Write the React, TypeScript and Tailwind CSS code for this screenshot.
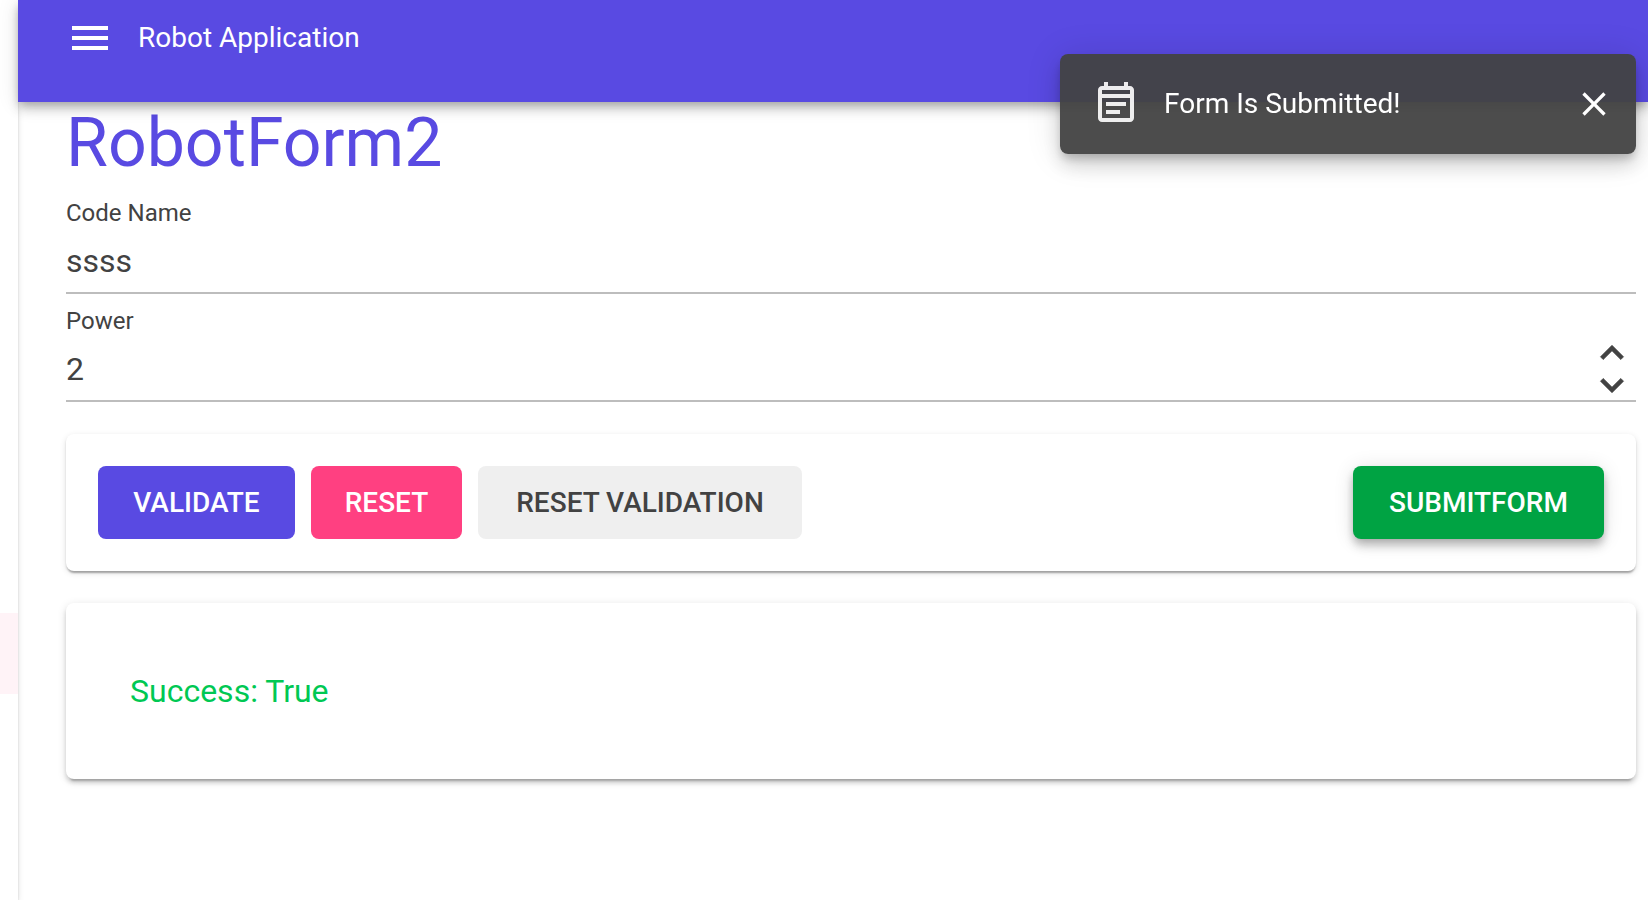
import { useState, type ReactNode } from "react";

const raised =
  "shadow-[0px_4px_8px_-2px_rgba(0,0,0,0.2),0px_8px_10px_0px_rgba(0,0,0,0.14),0px_2px_20px_0px_rgba(0,0,0,0.12)]";

function Icon({ path, className }: { path: string; className: string }) {
  return (
    <svg viewBox="0 0 24 24" fill="currentColor" aria-hidden="true" className={className}>
      <path d={path} />
    </svg>
  );
}

function Field({ id, label, children }: { id: string; label: string; children: ReactNode }) {
  return (
    <div className="border-b-2 border-[#bdbdbd] pt-[14px]">
      <label htmlFor={id} className="mb-1 block text-2xl leading-[26px]">
        {label}
      </label>
      <div className="flex h-[62px] items-center">{children}</div>
    </div>
  );
}

const buttonBase = "h-[73px] cursor-pointer rounded-lg px-4 text-[28px] font-medium uppercase";
const inputBase = "h-full min-w-0 flex-1 bg-transparent text-[32px] outline-none";
const spinButton = "flex h-8 w-12 cursor-pointer items-center justify-center";
const spinIcon = "size-[46px] shrink-0 stroke-current [stroke-width:0.4]";

export default function App() {
  const [codeName, setCodeName] = useState("ssss");
  const [power, setPower] = useState(2);
  const [open, setOpen] = useState(true);

  const reset = () => {
    setCodeName("");
    setPower(0);
  };

  return (
    <div className="flex min-h-screen bg-white font-[Roboto,sans-serif] text-[#424242]">
      <aside className="w-[18px] shrink-0 bg-white pt-[613px] shadow-[0px_4px_2px_-2px_rgba(0,0,0,0.2),0px_2px_2px_0px_rgba(0,0,0,0.14),0px_2px_6px_0px_rgba(0,0,0,0.12)]">
        <div className="h-[81px] bg-[#fff3f7]" />
      </aside>

      <div className="min-w-0 flex-1">
        <header className={`relative flex items-center gap-6 bg-[#594ae2] pt-[14px] pb-10 pl-12 text-white ${raised}`}>
          <button type="button" aria-label="Menu" className="cursor-pointer">
            <Icon className="size-12" path="M3 18h18v-2H3v2zm0-5h18v-2H3v2zm0-7v2h18V6H3z" />
          </button>
          <span className="text-[28px] leading-[44px]">Robot Application</span>
        </header>

        <main className="pr-3 pb-8 pl-12">
          <h1 className="mb-0.5 text-[68px] leading-[82px] text-[#594ae2]">RobotForm2</h1>

          <form onSubmit={(e) => { e.preventDefault(); setOpen(true); }}>
            <Field id="code-name" label="Code Name">
              <input
                id="code-name"
                type="text"
                value={codeName}
                onChange={(e) => setCodeName(e.target.value)}
                className={inputBase}
              />
            </Field>
            <Field id="power" label="Power">
              <input
                id="power"
                type="number"
                value={power}
                onChange={(e) => setPower(Number(e.target.value))}
                className={`${inputBase} [appearance:textfield] [&::-webkit-inner-spin-button]:appearance-none`}
              />
              <div className="flex flex-col">
                <button type="button" aria-label="Increase power" onClick={() => setPower(power + 1)} className={spinButton}>
                  <Icon className={spinIcon} path="M7.41 15.41 12 10.83l4.59 4.58L18 14l-6-6-6 6z" />
                </button>
                <button type="button" aria-label="Decrease power" onClick={() => setPower(power - 1)} className={spinButton}>
                  <Icon className={spinIcon} path="M7.41 8.59 12 13.17l4.59-4.58L18 10l-6 6-6-6z" />
                </button>
              </div>
            </Field>

            <div className="mt-8 flex items-center gap-4 rounded-lg bg-white p-8 shadow-[0px_4px_2px_-2px_rgba(0,0,0,0.2),0px_2px_2px_0px_rgba(0,0,0,0.14),0px_2px_6px_0px_rgba(0,0,0,0.12)]">
              <button type="button" className={`${buttonBase} min-w-[197px] bg-[#594ae2] text-white`}>
                Validate
              </button>
              <button type="button" onClick={reset} className={`${buttonBase} min-w-[151px] bg-[#ff4081] text-white`}>
                Reset
              </button>
              <button type="button" className={`${buttonBase} min-w-[324px] bg-[#efefef]`}>
                Reset Validation
              </button>
              <button type="submit" className={`${buttonBase} ml-auto min-w-[251px] bg-[#00a343] text-white ${raised}`}>
                SubmitForm
              </button>
            </div>
          </form>

          <section className="mt-8 rounded-lg bg-white p-16 shadow-[0px_6px_2px_-4px_rgba(0,0,0,0.2),0px_4px_4px_0px_rgba(0,0,0,0.14),0px_2px_10px_0px_rgba(0,0,0,0.12)]">
            <p className="text-[32px] leading-[48px] text-[#00c853]">Success: True</p>
          </section>
        </main>
      </div>

      {open && (
        <div
          role="status"
          className="fixed top-[54px] right-3 flex h-[100px] w-[576px] items-center rounded-lg bg-[#424242]/95 pr-[22px] pl-8 text-white shadow-[0px_6px_10px_-2px_rgba(0,0,0,0.2),0px_12px_20px_0px_rgba(0,0,0,0.14),0px_2px_36px_0px_rgba(0,0,0,0.12)]"
        >
          <Icon
            className="mr-6 size-12 opacity-90"
            path="M19 3h-1V1h-2v2H8V1H6v2H5c-1.11 0-2 .9-2 2v14c0 1.1.89 2 2 2h14c1.1 0 2-.9 2-2V5c0-1.1-.9-2-2-2zm0 16H5V9h14v10zM5 7V5h14v2H5zm2 4h10v2H7v-2zm0 4h7v2H7v-2z"
          />
          <p className="flex-1 text-[28px] leading-10">Form Is Submitted!</p>
          <button type="button" aria-label="Close" onClick={() => setOpen(false)} className="cursor-pointer">
            <Icon
              className="size-10"
              path="M19 6.41L17.59 5 12 10.59 6.41 5 5 6.41 10.59 12 5 17.59 6.41 19 12 13.41 17.59 19 19 17.59 13.41 12z"
            />
          </button>
        </div>
      )}
    </div>
  );
}
